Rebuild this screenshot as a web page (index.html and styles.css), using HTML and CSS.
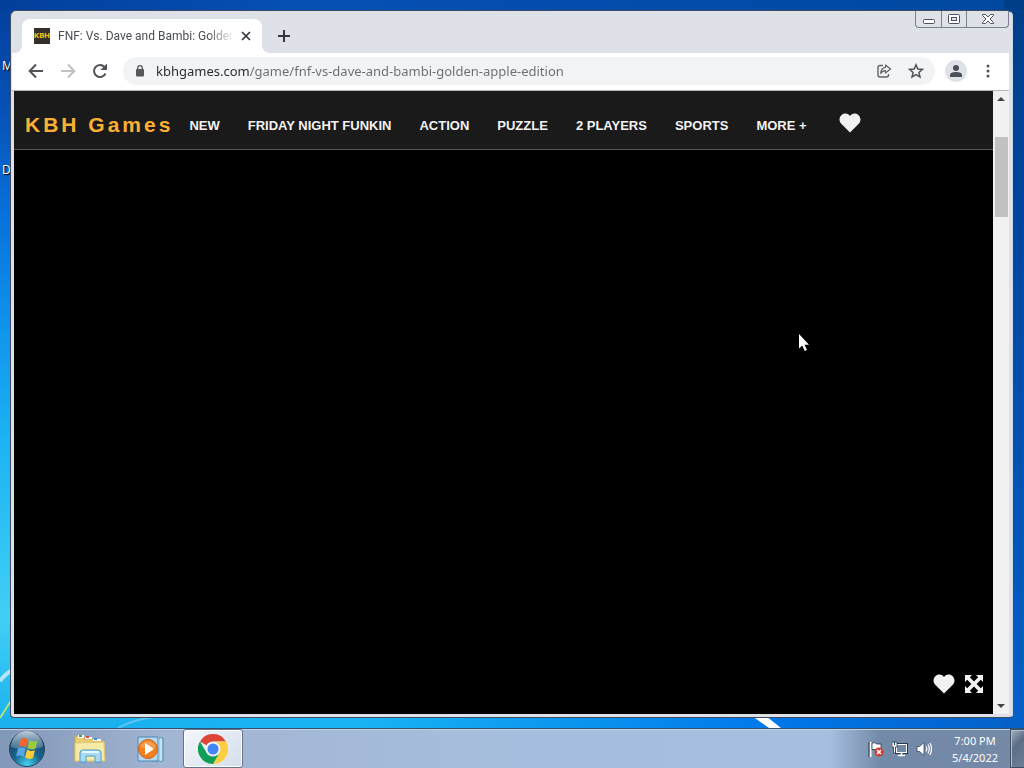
FILE: index.html
```html
<!DOCTYPE html>
<html lang="en">
<head>
    <meta charset="UTF-8">
    <meta name="viewport" content="width=device-width, initial-scale=1.0">
    <title>FNF: Vs. Dave and Bambi: Golden Apple Edition</title>
    <link rel="stylesheet" href="styles.css">
</head>
<body>
    <main class="desktop">
        <svg class="wallpaper" viewBox="0 0 1024 728" preserveAspectRatio="none" aria-hidden="true">
            <path d="M0 681Q6 673 14 669" stroke="#b5e6fa" stroke-width="4" fill="none"/>
            <path d="M0 718L14 696" stroke="#a9e67c" stroke-width="2" fill="none"/>
            <path d="M118 728Q134 719 160 716" stroke="#5cc4ee" stroke-width="2" fill="none"/>
            <path d="M752 716H766L781 728H769Z" fill="#fff"/>
        </svg>
        <span class="shortcut shortcut-top">M</span>
        <span class="shortcut shortcut-bottom">D</span>

        <section class="window">
            <div class="tab-strip">
                <div class="tab">
                    <span class="favicon">KBH</span>
                    <span class="tab-title">FNF: Vs. Dave and Bambi: Golden</span>
                    <button class="tab-close" aria-label="Close tab">
                        <svg width="10" height="10" viewBox="0 0 10 10"><path d="M1 1L9 9M9 1L1 9" stroke="#33363b" stroke-width="1.700"/></svg>
                    </button>
                </div>
                <button class="new-tab" aria-label="New tab">
                    <svg width="12" height="12" viewBox="0 0 12 12"><path d="M6 0V12M0 6H12" stroke="#33363b" stroke-width="2"/></svg>
                </button>
                <div class="caption">
                    <button aria-label="Minimize">
                        <svg width="14" height="12" viewBox="0 0 14 12"><rect x="1.5" y="6.500" width="11" height="4" rx="1" fill="#fff" stroke="#4b4f60"/></svg>
                    </button>
                    <button aria-label="Maximize">
                        <svg width="14" height="12" viewBox="0 0 14 12"><rect x="1.500" y="1.500" width="11" height="9" rx="1" fill="#fff" stroke="#4b4f60"/><rect x="4.500" y="4.500" width="5" height="3" fill="#dfe2ea" stroke="#4b4f60"/></svg>
                    </button>
                    <button class="caption-close" aria-label="Close">
                        <svg width="14" height="12" viewBox="0 0 14 12"><path d="M1.500 1.500H4.500L7 4L9.500 1.500H12.500V2.500L9 6L12.500 9.500V10.500H9.500L7 8L4.500 10.500H1.500V9.500L5 6L1.500 2.500Z" fill="#fff" stroke="#4b4f60"/></svg>
                    </button>
                </div>
            </div>

            <div class="toolbar">
                <button class="tool" aria-label="Back">
                    <svg width="16" height="16" viewBox="0 0 16 16"><path d="M15 8H2M8 1.500L1.700 8L8 14.500" fill="none" stroke="#505358" stroke-width="2"/></svg>
                </button>
                <button class="tool" aria-label="Forward" disabled>
                    <svg width="16" height="16" viewBox="0 0 16 16"><path d="M1 8H14M8 1.500L14.300 8L8 14.500" fill="none" stroke="#bfc1c4" stroke-width="2"/></svg>
                </button>
                <button class="tool" aria-label="Reload">
                    <svg width="16" height="16" viewBox="0 0 16 16"><path d="M13.500 10.500A6 6 0 1 1 12.500 4" fill="none" stroke="#505358" stroke-width="2"/><path d="M15 0.500V7H8.500Z" fill="#505358"/></svg>
                </button>
                <div class="omnibox">
                    <svg class="lock" width="10" height="12" viewBox="0 0 10 12" aria-hidden="true"><rect x="1" y="4" width="8" height="7.500" rx="1" fill="#55585d"/><path d="M2.700 5V3A2.300 2.300 0 0 1 7.300 3V5" fill="none" stroke="#55585d" stroke-width="1.300"/></svg>
                    <input class="address" type="text" aria-label="Address" value="kbhgames.com/game/fnf-vs-dave-and-bambi-golden-apple-edition">
                    <button class="tool" aria-label="Share">
                        <svg width="16" height="16" viewBox="0 0 16 16"><path d="M7 2.500H4Q2 2.500 2 4.500V12Q2 14 4 14H10.500Q12.500 14 12.500 12V11" fill="none" stroke="#5f6368" stroke-width="1.400"/><path d="M9.500 2L14.500 6L9.500 10V7.700Q6.500 7.700 4.700 10.500Q5 5 9.500 4.300Z" fill="none" stroke="#5f6368" stroke-width="1.200" stroke-linejoin="round"/></svg>
                    </button>
                    <button class="tool" aria-label="Bookmark this page">
                        <svg width="16" height="16" viewBox="0 0 16 16"><path d="M8 1.800L9.800 6L14.400 6.400L10.900 9.400L12 13.900L8 11.500L4 13.900L5.100 9.400L1.600 6.400L6.200 6Z" fill="none" stroke="#505358" stroke-width="1.500"/></svg>
                    </button>
                </div>
                <button class="profile" aria-label="Profile">
                    <svg width="14" height="14" viewBox="0 0 14 14"><circle cx="7" cy="4" r="3" fill="#4a4e5a"/><path d="M1 13V11Q1 8 7 8T13 11V13Z" fill="#4a4e5a"/></svg>
                </button>
                <button class="menu" aria-label="Menu">
                    <svg width="4" height="14" viewBox="0 0 4 14"><circle cx="2" cy="2" r="1.500" fill="#505358"/><circle cx="2" cy="7" r="1.500" fill="#505358"/><circle cx="2" cy="12" r="1.500" fill="#505358"/></svg>
                </button>
            </div>

            <div class="viewport">
                <div class="page">
                    <nav class="site-nav">
                        <a class="logo" href="#">KBH Games</a>
                        <a href="#">NEW</a>
                        <a href="#">FRIDAY NIGHT FUNKIN</a>
                        <a href="#">ACTION</a>
                        <a href="#">PUZZLE</a>
                        <a href="#">2 PLAYERS</a>
                        <a href="#">SPORTS</a>
                        <a href="#">MORE +</a>
                        <a class="favorites" href="#" aria-label="Favorites">
                            <svg width="22" height="20" viewBox="0 0 22 20"><path d="M11 19.500L2 10.500C-3 4 6-3.500 11 3C16-3.500 25 4 20 10.500Z" fill="#f2f2f2"/></svg>
                        </a>
                    </nav>
                    <div class="game">
                        <div class="game-actions">
                            <button aria-label="Like">
                                <svg width="22" height="20" viewBox="0 0 22 20"><path d="M11 19.500L2 10.500C-3 4 6-3.500 11 3C16-3.500 25 4 20 10.500Z" fill="#f2f2f2"/></svg>
                            </button>
                            <button aria-label="Fullscreen">
                                <svg width="18" height="18" viewBox="0 0 18 18"><path d="M0 0H7L4.800 2.200L9 6.400L13.200 2.200L11 0H18V7L15.800 4.800L11.600 9L15.800 13.200L18 11V18H11L13.200 15.800L9 11.600L4.800 15.800L7 18H0V11L2.200 13.200L6.400 9L2.200 4.800L0 7Z" fill="#f2f2f2"/></svg>
                            </button>
                        </div>
                    </div>
                </div>
                <div class="scrollbar">
                    <button aria-label="Scroll up"><svg width="8" height="4" viewBox="0 0 8 4"><path d="M0 4L4 0L8 4Z" fill="#444"/></svg></button>
                    <div class="track"><div class="thumb"></div></div>
                    <button aria-label="Scroll down"><svg width="8" height="4" viewBox="0 0 8 4"><path d="M0 0L4 4L8 0Z" fill="#444"/></svg></button>
                </div>
            </div>
        </section>

        <svg class="cursor" width="12" height="19" viewBox="0 0 12 19" aria-hidden="true"><path d="M1 1V15.500L4.200 12.500L6.700 18L9 17L6.500 11.800H11Z" fill="#fff"/></svg>
    </main>

    <footer class="taskbar">
        <button class="start" aria-label="Start">
            <svg width="38" height="38" viewBox="0 0 38 38">
                <defs>
                    <radialGradient id="orb" cx="0.5" cy="0.95" r="0.9">
                        <stop offset="0" stop-color="#46d5ef"/>
                        <stop offset="0.450" stop-color="#17658e"/>
                        <stop offset="1" stop-color="#1b4267"/>
                    </radialGradient>
                    <linearGradient id="shine" x1="0" y1="0" x2="0" y2="1">
                        <stop offset="0" stop-color="#dbe7f1" stop-opacity="0.850"/>
                        <stop offset="1" stop-color="#8aa9c2" stop-opacity="0.350"/>
                    </linearGradient>
                </defs>
                <circle cx="19" cy="19" r="17.500" fill="url(#orb)" stroke="#2c4260"/>
                <path d="M3 17A16 16 0 0 1 35 17Q19 22 3 17Z" fill="url(#shine)"/>
                <path d="M13 9Q16.500 6.500 20 9.500L18 17.500Q14.500 15 10.500 17Z" fill="#f0682e"/>
                <path d="M21.500 10Q25 12.500 29.500 10.500L27.500 18.500Q23.500 20.500 19.500 18Z" fill="#9ccb3b"/>
                <path d="M10 18.500Q14 16.500 17.500 19L15.500 27Q12 24.500 8 26.500Z" fill="#55a7e8"/>
                <path d="M19 19.500Q23 22 27 20L25 28Q21 30 17 27.500Z" fill="#fccb3c"/>
            </svg>
        </button>
        <button class="task" aria-label="Windows Explorer">
            <svg width="34" height="30" viewBox="0 0 34 30">
                <path d="M2 2H11V5H20V7H31V27H2Z" fill="#e9ce72" stroke="#c9a94f"/>
                <path d="M5 1H11V4H5Z" fill="#fff"/><path d="M6 1H9V3H6Z" fill="#3aa655"/>
                <path d="M12 3H19V5H12Z" fill="#fff"/><path d="M13 2H16V4H13Z" fill="#d94c3d"/>
                <path d="M20 5H28V7H20Z" fill="#fff"/><path d="M21 4H24V6H21Z" fill="#3f86d8"/>
                <path d="M2 9L31 8L32 27H2Z" fill="#f7e9a6" stroke="#dcc67a"/>
                <path d="M7 28V19Q7 16 10 16H25Q28 16 28 19V28H22V22H13V28Z" fill="#a9daf2" stroke="#4b9fca"/>
                <path d="M9 18H26" stroke="#e5f7ff" stroke-width="2"/>
            </svg>
        </button>
        <button class="task" aria-label="Windows Media Player">
            <svg width="30" height="28" viewBox="0 0 30 28">
                <path d="M16 3H27V26H16Z" fill="#9fd0e8" stroke="#4f8fb4"/>
                <path d="M22 2V26M25 3V26" stroke="#e6f6fc"/>
                <path d="M2 2H22V26H2Z" fill="#b4d9ef" stroke="#4e87b5"/>
                <circle cx="12" cy="14" r="9.500" fill="#f28020" stroke="#cf6214"/>
                <path d="M4 12A8.500 8.500 0 0 1 20 12Q12 15 4 12Z" fill="#f8b16c" opacity="0.600"/>
                <path d="M9 8L18 14L9 20Z" fill="#fff"/>
            </svg>
        </button>
        <button class="task active" aria-label="Google Chrome">
            <svg width="30" height="30" viewBox="0 0 30 30">
                <path d="M2 7.500A15 15 0 0 1 28 7.500H15A7.500 7.500 0 0 0 8.500 11.250Z" fill="#db4437"/>
                <path d="M28 7.500A15 15 0 0 1 15 30L21.500 18.750A7.500 7.500 0 0 0 15 7.500Z" fill="#ffcd40"/>
                <path d="M15 30A15 15 0 0 1 2 7.500L8.500 18.750A7.500 7.500 0 0 0 21.500 18.750Z" fill="#0f9d58"/>
                <circle cx="15" cy="15" r="7" fill="#f1f1f1"/>
                <circle cx="15" cy="15" r="5.500" fill="#4285f4"/>
            </svg>
        </button>
        <div class="tray">
            <button aria-label="Action Center">
                <svg width="16" height="16" viewBox="0 0 16 16"><path d="M2.500 1V16" stroke="#fff" stroke-width="2"/><path d="M1 1V16" stroke="#27384f"/><path d="M4 2Q7 1 9 3H13V9Q10 10 8 8.500H4Z" fill="#fff" stroke="#27384f" stroke-width="0.800"/><circle cx="11" cy="11" r="4.500" fill="#d23b2e"/><path d="M9 9L13 13M13 9L9 13" stroke="#fff" stroke-width="1.600"/></svg>
            </button>
            <button aria-label="Network">
                <svg width="16" height="16" viewBox="0 0 16 16"><rect x="4.500" y="3.500" width="10" height="8" fill="#667b98" stroke="#27384f" stroke-width="3"/><rect x="4.500" y="3.500" width="10" height="8" fill="#7187a5" stroke="#fff"/><path d="M6 14.500H13M9.500 12V14" stroke="#fff" stroke-width="1.500"/><path d="M0 1H5V6H3.500V12H1.500V6H0Z" fill="#fff" stroke="#27384f" stroke-width="0.800"/><path d="M2.500 1V4" stroke="#27384f"/></svg>
            </button>
            <button aria-label="Volume">
                <svg width="16" height="16" viewBox="0 0 16 16"><path d="M1 5.500H3.500L8 1.500V14.500L3.500 10.500H1Z" fill="#fff" stroke="#34465f" stroke-width="0.800"/><path d="M10 5.500Q11.500 8 10 10.500M12 3.500Q14.500 8 12 12.500M14 2Q17 8 14 14" fill="none" stroke="#fff" stroke-width="1.200"/></svg>
            </button>
            <time class="clock" datetime="2022-05-04T19:00"><span>7:00 PM</span><span>5/4/2022</span></time>
        </div>
        <button class="show-desktop" aria-label="Show desktop"></button>
    </footer>
</body>
</html>
```

FILE: styles.css
```css
* {
    box-sizing: border-box;
}

body {
    display: flex;
    flex-direction: column;
    height: 100vh;
    margin: 0;
    overflow: hidden;
    font-family: "Open Sans", "Noto Sans", sans-serif;
    font-size: 12px;
}

button {
    display: flex;
    align-items: center;
    justify-content: center;
    flex: none;
    padding: 0;
    border: none;
    background: none;
}

svg {
    display: block;
    flex: none;
}

/* Desktop */
.desktop {
    position: relative;
    display: flex;
    flex: 1;
    min-height: 0;
    padding: 10px 11px 10px 10px;
    background:
        linear-gradient(#003f88, #0046a0 30%, #0560c8) right / 20px 100% no-repeat,
        linear-gradient(90deg, #1cb0ee, #18b4f4 35%, #0078ea 75%, #0560c8) bottom / 100% 12px no-repeat,
        linear-gradient(90deg, #023f9c, #0650b4 30%, #0048a0) top / 100% 12px no-repeat,
        linear-gradient(#023f9c, #0650b4 14%, #0872dc 30%, #0f94ec 45%, #1cb2f4 60%, #40d0f5 85%, #1cb0ee);
}

.wallpaper {
    position: absolute;
    inset: 0;
    width: 100%;
    height: 100%;
}

.shortcut {
    position: absolute;
    left: 2px;
    color: #fff;
    line-height: 16px;
    text-shadow: 1px 1px 1px #000;
}

.shortcut-top {
    top: 58px;
}

.shortcut-bottom {
    top: 162px;
}

.cursor {
    position: absolute;
    left: 798px;
    top: 333px;
}

/* Browser window */
.window {
    position: relative;
    display: flex;
    flex: 1;
    flex-direction: column;
    min-width: 0;
    padding: 0 3px 3px 3px;
    border: 1px solid #3f4b5e;
    border-right-color: #c9d6e6;
    border-radius: 6px 6px 4px 4px;
    background: #dee1e7;
}

.tab-strip {
    display: flex;
    align-items: flex-start;
    flex: none;
    height: 42px;
    padding-left: 8px;
}

.tab {
    position: relative;
    display: flex;
    align-items: center;
    width: 240px;
    height: 34px;
    margin-top: 8px;
    padding: 0 8px 0 12px;
    border-radius: 8px 8px 0 0;
    background: #fff;
}

.tab::before,
.tab::after {
    content: "";
    position: absolute;
    bottom: 0;
    width: 8px;
    height: 8px;
}

.tab::before {
    right: 100%;
    background: radial-gradient(circle at 0 0, transparent 8px, #fff 8px);
}

.tab::after {
    left: 100%;
    background: radial-gradient(circle at 100% 0, transparent 8px, #fff 8px);
}

.favicon {
    flex: none;
    width: 16px;
    height: 16px;
    margin-right: 8px;
    background: #33302b;
    color: #f2c811;
    font: bold 8px/16px Roboto, sans-serif;
    text-align: center;
}

.tab-title {
    flex: 1;
    min-width: 0;
    color: #4a4d51;
    font-family: Roboto, sans-serif;
    white-space: nowrap;
    -webkit-mask-image: linear-gradient(90deg, #000 85%, transparent);
    mask-image: linear-gradient(90deg, #000 85%, transparent);
}

.tab-close {
    width: 16px;
    height: 16px;
    margin-left: 4px;
}

.new-tab {
    width: 28px;
    height: 28px;
    margin: 11px 0 0 8px;
}

.caption {
    display: flex;
    height: 17px;
    margin-left: auto;
    border: 1px solid #7b7e8c;
    border-top: none;
    border-radius: 0 0 4px 4px;
}

.caption button {
    width: 25px;
}

.caption button + button {
    border-left: 1px solid #7b7e8c;
}

.caption .caption-close {
    width: 42px;
}

.toolbar {
    display: flex;
    align-items: center;
    flex: none;
    height: 38px;
    margin-left: -2px;
    padding: 0 10px 1px 8px;
    border-bottom: 1px solid #b4b6b9;
    background: #fff;
}

.tool {
    width: 32px;
    height: 28px;
}

.omnibox {
    display: flex;
    align-items: center;
    flex: 1;
    min-width: 0;
    height: 28px;
    margin: 0 10px 0 7px;
    padding: 0 3px 0 12px;
    border-radius: 14px;
    background: #f1f3f4;
}

.address {
    flex: 1;
    min-width: 0;
    height: 28px;
    margin-left: 11px;
    padding: 0;
    border: none;
    outline: none;
    /* host name dark, path grey */
    background: linear-gradient(90deg, #26282b 94px, #6a6d71 94px) text;
    -webkit-background-clip: text;
    color: transparent;
    font: 13px/28px "Noto Sans", sans-serif;
}

.profile {
    width: 22px;
    height: 22px;
    border-radius: 50%;
    background: #dfe1e8;
}

.menu {
    width: 22px;
    height: 28px;
    margin-left: 10px;
}

/* Page */
.viewport {
    display: flex;
    flex: 1;
    min-height: 0;
}

.page {
    display: flex;
    flex: 1;
    flex-direction: column;
    min-width: 0;
    background: #000;
}

.site-nav {
    display: flex;
    align-items: center;
    flex: none;
    gap: 28px;
    height: 59px;
    padding: 12px 11px 0;
    border-bottom: 1px solid #555;
    background: #1a1a1a;
}

.site-nav a {
    color: #f2f2f2;
    font: bold 13px/20px "Liberation Sans", Arial, sans-serif;
    text-decoration: none;
    white-space: nowrap;
}

.site-nav .logo {
    margin: 0 -12px 2px 0;
    color: #fbb034;
    font-size: 21px;
    letter-spacing: 3px;
}

.site-nav .favorites {
    margin: 0 0 6px 4px;
}

.game {
    position: relative;
    flex: 1;
}

.game-actions {
    position: absolute;
    right: 10px;
    bottom: 20px;
    display: flex;
    align-items: center;
    gap: 10px;
}

.scrollbar {
    display: flex;
    flex-direction: column;
    width: 16px;
    background: #f1f1f1;
}

.scrollbar button {
    width: 16px;
    height: 16px;
}

.track {
    flex: 1;
    padding: 30px 1px 0 2px;
}

.thumb {
    height: 80px;
    background: #c1c1c1;
}

/* Taskbar */
.taskbar {
    display: flex;
    flex: none;
    height: 40px;
    padding-left: 8px;
    border-top: 1px solid #33506f;
    background: linear-gradient(90deg, #8298b8, #91a5c4 8%, #a2b5d2 16%, #a6bedd 50%, #a6bfdf 81%, #7389a8 86%, #7489a6);
    box-shadow: inset 0 1px #c3d3e6;
}

.start {
    width: 38px;
    margin-right: 14px;
}

.task {
    width: 60px;
    margin-right: 1px;
    border-radius: 3px;
}

.task.active {
    margin-left: 1px;
    border: 1px solid #64748c;
    background: linear-gradient(135deg, #f3f6fa, #d5deeb);
    box-shadow: inset 0 0 0 1px #fff;
}

.tray {
    display: flex;
    align-items: center;
    gap: 8px;
    margin-left: auto;
    margin-right: 12px;
}

.clock {
    display: flex;
    flex-direction: column;
    margin-left: 12px;
    color: #fff;
    font-family: "Noto Sans", sans-serif;
    font-size: 11px;
    line-height: 17px;
    text-align: center;
}

.show-desktop {
    width: 14px;
    border: 1px solid #3e4f66;
    border-right: none;
    background: linear-gradient(135deg, #a5b2c3, #5d6d84 40%, #6d8099);
    box-shadow: inset 1px 1px #b1bfd0;
}
```
